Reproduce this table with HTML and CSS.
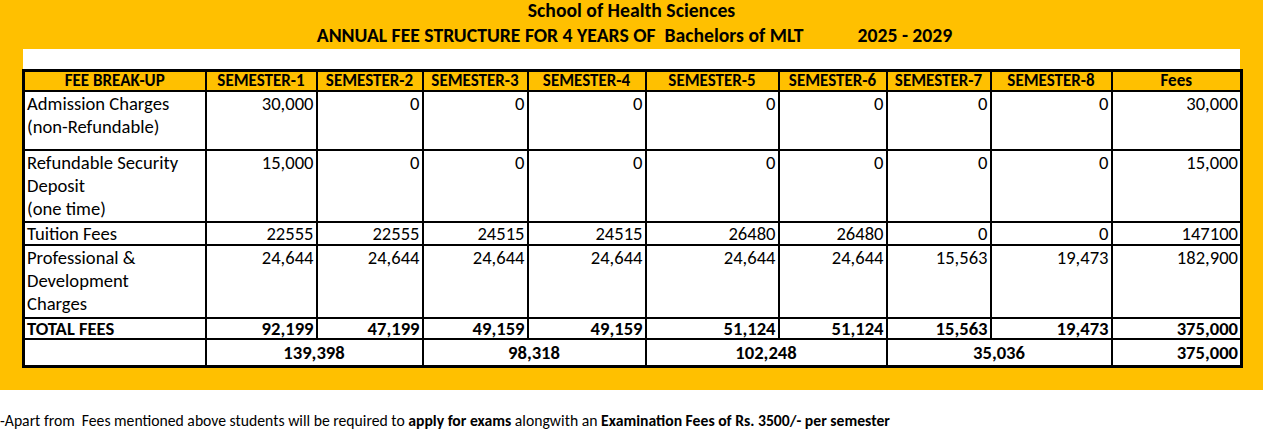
FILE: index.html
```html
<!DOCTYPE html>
<html>
<head>
<meta charset="utf-8">
<link rel="stylesheet" href="styles.css">
</head>
<body>
<div class="sheet">
  <div class="title">
    <div class="line1">School of Health Sciences</div>
    <div class="line2"><span>ANNUAL FEE STRUCTURE FOR 4 YEARS OF&nbsp; Bachelors of MLT</span><span>2025 - 2029</span></div>
  </div>
  <div class="blank"></div>
  <table class="fees">
    <colgroup>
      <col class="c0"><col class="c1"><col class="c2"><col class="c3"><col class="c4"><col class="c5"><col class="c6"><col class="c7"><col class="c8"><col class="c9">
    </colgroup>
    <thead>
      <tr class="head">
        <th>FEE BREAK-UP</th><th>SEMESTER-1</th><th>SEMESTER-2</th><th>SEMESTER-3</th><th>SEMESTER-4</th><th>SEMESTER-5</th><th>SEMESTER-6</th><th>SEMESTER-7</th><th>SEMESTER-8</th><th>Fees</th>
      </tr>
    </thead>
    <tbody>
      <tr class="r-adm">
        <td class="lbl">Admission Charges<br>(non-Refundable)</td><td>30,000</td><td>0</td><td>0</td><td>0</td><td>0</td><td>0</td><td>0</td><td>0</td><td>30,000</td>
      </tr>
      <tr class="r-ref">
        <td class="lbl">Refundable Security<br>Deposit<br>(one time)</td><td>15,000</td><td>0</td><td>0</td><td>0</td><td>0</td><td>0</td><td>0</td><td>0</td><td>15,000</td>
      </tr>
      <tr class="r-tui">
        <td class="lbl">Tuition Fees</td><td>22555</td><td>22555</td><td>24515</td><td>24515</td><td>26480</td><td>26480</td><td>0</td><td>0</td><td>147100</td>
      </tr>
      <tr class="r-pro">
        <td class="lbl">Professional &amp;<br>Development<br>Charges</td><td>24,644</td><td>24,644</td><td>24,644</td><td>24,644</td><td>24,644</td><td>24,644</td><td>15,563</td><td>19,473</td><td>182,900</td>
      </tr>
      <tr class="r-tot">
        <td class="lbl">TOTAL FEES</td><td>92,199</td><td>47,199</td><td>49,159</td><td>49,159</td><td>51,124</td><td>51,124</td><td>15,563</td><td>19,473</td><td>375,000</td>
      </tr>
      <tr class="r-yr">
        <td></td><td colspan="2" class="mid">139,398</td><td colspan="2" class="mid">98,318</td><td colspan="2" class="mid">102,248</td><td colspan="2" class="mid">35,036</td><td>375,000</td>
      </tr>
    </tbody>
  </table>
</div>
<p class="note">-Apart from&nbsp; Fees mentioned above students will be required to <b>apply for exams</b> alongwith an <b>Examination Fees of Rs. 3500/- per semester</b></p>
</body>
</html>
```

FILE: styles.css
```css
html, body {
  margin: 0;
  padding: 0;
  background: #fff;
}
body {
  font-family: Carlito, Lato, "Liberation Sans", sans-serif;
  color: #000;
}
.sheet {
  background: #ffc000;
  padding: 0 22px 22px 22px;
}
.title {
  height: 49px;
  font-weight: 700;
  font-size: 19.7px;
  text-align: center;
}
.line1 {
  line-height: 21px;
}
.line2 {
  display: flex;
  justify-content: center;
  gap: 54px;
  line-height: 28px;
  padding-left: 6px;
}
.blank {
  background: #fff;
  height: 20px;
  margin: 0 1px;
}
.fees {
  border-collapse: collapse;
  table-layout: fixed;
  width: 1219px;
  border: 3px solid #000;
  background: #fff;
  font-size: 18.6px;
}
.c0 { width: 182px; }
.c1 { width: 111px; }
.c2 { width: 106px; }
.c3 { width: 105px; }
.c4 { width: 118px; }
.c5 { width: 133px; }
.c6 { width: 108px; }
.c7 { width: 104px; }
.c8 { width: 121px; }
.c9 { width: 130px; }
.fees th, .fees td {
  border: 2px solid #000;
  padding: 0 2px;
  line-height: 23px;
  vertical-align: top;
  text-align: right;
  white-space: nowrap;
}
.fees th {
  background: #ffc000;
  font-size: 17px;
  font-weight: 700;
  text-align: center;
  vertical-align: middle;
  line-height: 16px;
}
.head { height: 20px; }
.fees td.lbl {
  text-align: left;
}
.r-adm { height: 59px; }
.r-ref { height: 72px; }
.r-tui { height: 21px; }
.r-tui td { line-height: 21px; }
.r-pro { height: 73px; }
.r-tot { height: 20px; font-weight: 700; }
.r-tot td { line-height: 19px; }
.r-yr { height: 28px; font-weight: 700; }
.r-yr td { vertical-align: middle; }
.fees td.mid { text-align: center; }
.note {
  margin: 21px 0 0 0;
  font-size: 15.7px;
  line-height: 20px;
}
```
